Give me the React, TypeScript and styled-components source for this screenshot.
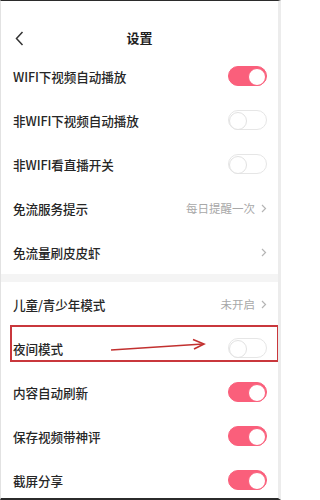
import React from 'react';
import styled, { createGlobalStyle } from 'styled-components';

const GlobalStyle = createGlobalStyle`
  html, body {
    margin: 0;
    padding: 0;
    background: #ffffff;
  }
  body {
    font-family: "Noto Sans CJK SC", "Noto Sans", sans-serif;
  }
`;

const Page = styled.div`
  box-sizing: border-box;
  width: 281px;
  height: 500px;
  overflow: hidden;
  background: #fff;
  border-top: 1px solid #2b2b2b;
  border-bottom: 2px solid #2b2b2b;
  border-left: 1px solid #e2e2e2;
  border-right: 3px solid #ececec;
  display: flex;
  flex-direction: column;
`;

const Header = styled.div`
  position: relative;
  height: 53px;
  flex-shrink: 0;
  display: flex;
  align-items: flex-start;
  justify-content: center;
  padding-top: 27px;
  box-sizing: border-box;
`;

const BackButton = styled.button`
  position: absolute;
  left: 12px;
  top: 29px;
  border: 0;
  background: none;
  padding: 0;
  width: 12px;
  height: 16px;
  display: flex;
  align-items: center;
  justify-content: center;
`;

const Title = styled.h1`
  margin: 0;
  font-size: 13px;
  line-height: 20px;
  font-weight: 700;
  color: #1e1e1e;
`;

const Section = styled.div`
  display: flex;
  flex-direction: column;
  flex-shrink: 0;
`;

const Gap = styled.div`
  height: 8px;
  flex-shrink: 0;
  background: #f4f4f4;
`;

const Row = styled.div`
  position: relative;
  height: 44px;
  flex-shrink: 0;
  display: flex;
  align-items: center;
  justify-content: space-between;
  padding: 0 11px 0 12px;
`;

const Label = styled.span`
  font-size: 12.6px;
  color: #262626;
  font-weight: 500;
  letter-spacing: -0.1px;
`;

const Value = styled.span`
  display: flex;
  align-items: center;
  gap: 6px;
  font-size: 11.5px;
  color: #a8a8a8;
`;

const Track = styled.span<{ $on: boolean }>`
  position: relative;
  box-sizing: border-box;
  width: 39px;
  height: 20px;
  border-radius: 10px;
  background: ${p => (p.$on ? '#fa5f7b' : '#ffffff')};
  border: 1px solid ${p => (p.$on ? '#fa5f7b' : '#e6e6e6')};
`;

const Knob = styled.span<{ $on: boolean }>`
  position: absolute;
  top: 1px;
  left: ${p => (p.$on ? '19px' : '0px')};
  width: 16px;
  height: 16px;
  border-radius: 50%;
  background: #fff;
  border: 1px solid ${p => (p.$on ? '#fa5f7b' : '#e2e2e2')};
`;

const Highlight = styled.div`
  position: absolute;
  left: 9px;
  right: -1px;
  top: -1px;
  height: 37px;
  box-sizing: border-box;
  border: 2px solid #c9373c;
  pointer-events: none;
`;

const Arrow = styled.svg`
  position: absolute;
  left: 108px;
  top: 12px;
  pointer-events: none;
`;

const Toggle = ({ on }: { on: boolean }) => (
  <Track $on={on}>
    <Knob $on={on} />
  </Track>
);

const Chevron = () => (
  <svg width="6" height="9" viewBox="0 0 6 9">
    <path d="M1 1 L4.5 4.5 L1 8" fill="none" stroke="#b5b5b5" strokeWidth="1.2" />
  </svg>
);

type Item = { label: string; toggle?: boolean; value?: string; link?: boolean; mark?: boolean };

const top: Item[] = [
  { label: 'WIFI下视频自动播放', toggle: true },
  { label: '非WIFI下视频自动播放', toggle: false },
  { label: '非WIFI看直播开关', toggle: false },
  { label: '免流服务提示', value: '每日提醒一次', link: true },
  { label: '免流量刷皮皮虾', link: true },
];

const bottom: Item[] = [
  { label: '儿童/青少年模式', value: '未开启', link: true },
  { label: '夜间模式', toggle: false, mark: true },
  { label: '内容自动刷新', toggle: true },
  { label: '保存视频带神评', toggle: true },
  { label: '截屏分享', toggle: true },
];

const SettingRow = ({ item }: { item: Item }) => (
  <Row>
    <Label>{item.label}</Label>
    {item.toggle !== undefined ? (
      <Toggle on={item.toggle} />
    ) : (
      <Value>
        {item.value}
        {item.link && <Chevron />}
      </Value>
    )}
    {item.mark && (
      <>
        <Highlight />
        <Arrow width="100" height="16" viewBox="0 0 100 16">
          <path d="M2 12 L94 6" stroke="#c2302f" strokeWidth="1.6" fill="none" />
          <path d="M84 1.5 L95 6 L85 11" stroke="#c2302f" strokeWidth="1.6" fill="none" />
        </Arrow>
      </>
    )}
  </Row>
);

export default function App() {
  return (
    <>
      <GlobalStyle />
      <Page>
        <Header>
          <BackButton>
            <svg width="9" height="15" viewBox="0 0 9 15">
              <path d="M7.5 1 L1.5 7.5 L7.5 14" fill="none" stroke="#333" strokeWidth="1.5" />
            </svg>
          </BackButton>
          <Title>设置</Title>
        </Header>
        <Section>
          {top.map(i => (
            <SettingRow key={i.label} item={i} />
          ))}
        </Section>
        <Gap />
        <Section>
          {bottom.map(i => (
            <SettingRow key={i.label} item={i} />
          ))}
        </Section>
      </Page>
    </>
  );
}
